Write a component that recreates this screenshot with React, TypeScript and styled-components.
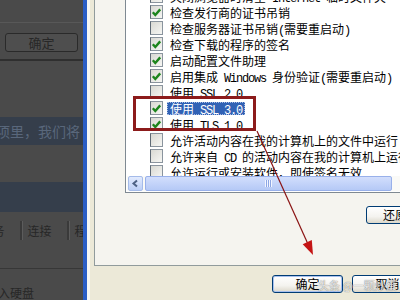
import React from 'react'
import styled, {createGlobalStyle} from 'styled-components'

const GlobalStyle = createGlobalStyle`
  html, body {
    margin: 0;
    padding: 0;
    background: #4a4a4a;
  }
  body {
    font-family: "Noto Sans CJK SC", "Noto Sans", sans-serif;
  }
`

const Screen = styled.div`
  position: relative;
  display: flex;
  width: 400px;
  height: 300px;
  overflow: hidden;
`

// dimmed window behind the dialog
const Backdrop = styled.div`
  flex-shrink: 0;
  display: flex;
  flex-direction: column;
  width: 83px;
  background: #4a4a4a;
  color: #272727;
  font-size: 13px;
  overflow: hidden;
  white-space: nowrap;
`

const TitleStrip = styled.div`
  height: 22px;
  border-bottom: 1px solid #585858;
`

const DimButtonRow = styled.div`
  height: 27px;
  padding: 10px 0 0 5px;
  border-bottom: 2px solid #2f2f2f;
`

const DimButton = styled.div`
  width: 71px;
  height: 17px;
  line-height: 17px;
  text-align: center;
  border: 1px solid #2a2a2a;
  border-radius: 3px;
  background: #4e4e4e;
`

const Gap = styled.div<{ $h: number }>`
  flex-shrink: 0;
  height: ${p => p.$h}px;
`

const Band = styled.div<{ $h: number }>`
  flex-shrink: 0;
  height: ${p => p.$h}px;
  background: #353e4b;
  color: #59677b;
  font-size: 14px;
  line-height: ${p => p.$h}px;
  text-indent: -4px;
`

const DimTabs = styled.div`
  display: flex;
  height: 19px;
  margin-left: -25px;
  font-size: 12px;
  line-height: 19px;
`

const DimTab = styled.div`
  flex-shrink: 0;
  width: 35px;
  padding-right: 10px;
  text-align: center;
  border-right: 2px solid #3a3a3a;
  box-shadow: 1px 0 0 #5c5c5c;
`

const DimRule = styled.div`
  height: 1px;
  background: #373737;
`

const DimText = styled.div`
  padding-top: 17px;
  font-size: 12px;
  line-height: 14px;
  text-indent: -2px;
`

// the options dialog
const Dialog = styled.div`
  flex-shrink: 0;
  display: flex;
  flex-direction: column;
  width: 416px;
  padding-left: 7px;
  border-left: 4px solid #2b5ec6;
  background: #ece9d8;
  box-shadow: inset 3px 0 0 #f7f7f3;
`

const TabPage = styled.div`
  display: flex;
  flex-direction: column;
  height: 265px;
  margin-right: 7px;
  padding-left: 30px;
  border-left: 1px solid #919b9c;
  border-bottom: 1px solid #919b9c;
  background: #f5f4ef;
`

const ListBox = styled.div`
  display: flex;
  flex-direction: column;
  width: 343px;
  height: 191px;
  padding: 0 1px 1px;
  border: 1px solid #7f8992;
  border-top: none;
  background: #fff;
`

const RowViewport = styled.div`
  flex: 1;
  overflow: hidden;
`

const RowList = styled.div`
  margin-top: -12px;
`

const Row = styled.div`
  display: flex;
  align-items: center;
  height: 16px;
  padding-left: 23px;
  white-space: nowrap;
`

const Box = styled.span`
  flex-shrink: 0;
  display: flex;
  align-items: center;
  justify-content: center;
  box-sizing: border-box;
  width: 13px;
  height: 14px;
  border: 1px solid #8a949e;
  border-left-color: #5f6a75;
  background: linear-gradient(135deg, #d9d9d3, #f6f6f3);
`

const Label = styled.span<{ $selected?: boolean }>`
  height: 13px;
  margin-left: 4px;
  padding: 0 3px;
  font-size: 12px;
  line-height: 13px;
  color: ${p => (p.$selected ? '#fff' : '#000')};
  background: ${p => (p.$selected ? '#3162b5' : 'transparent')};
  outline: ${p => (p.$selected ? '1px dotted #a9bde4' : 'none')};
  outline-offset: -1px;
`

const Latin = styled.span`
  font-family: "Liberation Mono", monospace;
  font-size: 12px;
  letter-spacing: -1.2px;
`

const HScroll = styled.div`
  display: flex;
  height: 15px;
  padding-left: 1px;
  background: #fafaf7;
`

const ScrollArrow = styled.div`
  display: flex;
  align-items: center;
  justify-content: center;
  width: 13px;
  border: 1px solid #a5bbe9;
  border-radius: 2px;
  background: linear-gradient(#e2ebfe, #bccff7);
`

const Thumb = styled.div`
  display: flex;
  align-items: center;
  justify-content: center;
  width: 245px;
  margin-left: 2px;
  border: 1px solid #98b0ea;
  border-radius: 2px;
  background: linear-gradient(#d2defc, #b5c9f6);
`

const Grip = styled.span`
  width: 7px;
  height: 7px;
  background: repeating-linear-gradient(to right, #f2f5ff 0 1px, #8ca6e4 1px 2px);
`

const RestoreRow = styled.div`
  display: flex;
  justify-content: flex-end;
  width: 347px;
  margin-top: 13px;
`

const XpButton = styled.div<{ $width: number; $indent?: number; $primary?: boolean }>`
  flex-shrink: 0;
  box-sizing: border-box;
  width: ${p => p.$width}px;
  height: 18px;
  padding-left: ${p => p.$indent ?? 0}px;
  border: 1px solid #003c74;
  border-radius: 3px;
  background: linear-gradient(#ffffff, #f4f3ef 60%, #dcd8cb);
  box-shadow: ${p => (p.$primary ? 'inset 0 0 0 1px #a9c1ee' : 'none')};
  font-size: 12px;
  line-height: 16px;
  color: #000;
  text-align: ${p => (p.$indent ? 'left' : 'center')};
  white-space: nowrap;
  overflow: hidden;
`

const Footer = styled.div`
  display: flex;
  justify-content: flex-end;
  gap: 9px;
  padding: 9px 7px 0 0;
`

// annotations drawn over the screenshot
const Callout = styled.div`
  position: absolute;
  left: 133px;
  top: 96px;
  box-sizing: border-box;
  width: 123px;
  height: 35px;
  border: 3px solid #8c1b1b;
  pointer-events: none;
`

const Pointer = styled.svg`
  position: absolute;
  left: 0;
  top: 0;
  pointer-events: none;
`

const Watermark = styled.div`
  position: absolute;
  left: 318px;
  top: 279px;
  font-size: 11px;
  line-height: 13px;
  color: rgba(255, 255, 255, 0.85);
  text-shadow: 0 0 1px rgba(0, 0, 0, 0.7);
  white-space: nowrap;
  pointer-events: none;
`

type Option = { text: string; checked: boolean; selected?: boolean }

const options: Option[] = [
  {text: '关闭浏览器时清空 Internet 临时文件夹', checked: false},
  {text: '检查发行商的证书吊销', checked: true},
  {text: '检查服务器证书吊销(需要重启动)', checked: false},
  {text: '检查下载的程序的签名', checked: true},
  {text: '启动配置文件助理', checked: true},
  {text: '启用集成 Windows 身份验证(需要重启动)', checked: true},
  {text: '使用 SSL 2.0', checked: false},
  {text: '使用 SSL 3.0', checked: true, selected: true},
  {text: '使用 TLS 1.0', checked: true},
  {text: '允许活动内容在我的计算机上的文件中运行', checked: false},
  {text: '允许来自 CD 的活动内容在我的计算机上运行', checked: false},
  {text: '允许运行或安装软件，即使签名无效', checked: false},
]

// half-width runs use a narrow mono face, like SimSun does
const renderText = (text: string) =>
  text.split(/([\x20-\x7e]+)/).filter(Boolean).map((part, i) =>
    /^[\x20-\x7e]+$/.test(part)
      ? <Latin key={i}>{part}</Latin>
      : <React.Fragment key={i}>{part}</React.Fragment>
  )

const Check = () => (
  <svg width="11" height="11" viewBox="0 0 11 11">
    <polyline points="1.8,5.2 4.3,8 9.2,2.4" fill="none" stroke="#1d851d" strokeWidth="2.4"/>
  </svg>
)

export default function App() {
  return <>
    <GlobalStyle/>
    <Screen>
      <Backdrop>
        <TitleStrip/>
        <DimButtonRow>
          <DimButton>确定</DimButton>
        </DimButtonRow>
        <Gap $h={56}/>
        <Band $h={28}>项里，我们将</Band>
        <Gap $h={37}/>
        <Band $h={30}/>
        <Gap $h={9}/>
        <DimTabs>
          <DimTab>服务</DimTab>
          <DimTab>连接</DimTab>
          <DimTab>程序</DimTab>
        </DimTabs>
        <Gap $h={28}/>
        <DimRule/>
        <DimText>入硬盘</DimText>
      </Backdrop>

      <Dialog>
        <TabPage>
          <ListBox>
            <RowViewport>
              <RowList>
                {options.map((o, i) => (
                  <Row key={i}>
                    <Box>{o.checked && <Check/>}</Box>
                    <Label $selected={o.selected}>{renderText(o.text)}</Label>
                  </Row>
                ))}
              </RowList>
            </RowViewport>
            <HScroll>
              <ScrollArrow>
                <svg width="9" height="9" viewBox="0 0 9 9">
                  <polyline points="6,1.5 2.5,4.5 6,7.5" fill="none" stroke="#4d6185" strokeWidth="2"/>
                </svg>
              </ScrollArrow>
              <Thumb><Grip/></Thumb>
            </HScroll>
          </ListBox>
          <RestoreRow>
            <XpButton $width={106} $indent={16}>还原默认设置</XpButton>
          </RestoreRow>
        </TabPage>
        <Footer>
          <XpButton $width={71} $primary>确定</XpButton>
          <XpButton $width={71}>取消</XpButton>
          <XpButton $width={71}>应用</XpButton>
        </Footer>
      </Dialog>

      <Callout/>
      <Pointer width="400" height="300" viewBox="0 0 400 300">
        <line x1="257" y1="131" x2="307.5" y2="243" stroke="#8b1414" strokeWidth="1.2"/>
        <polygon points="313,255 302.7,244.3 311.8,240.1" fill="#c41414"/>
      </Pointer>
      <Watermark>头条 @一颗炒蛋</Watermark>
    </Screen>
  </>
}
